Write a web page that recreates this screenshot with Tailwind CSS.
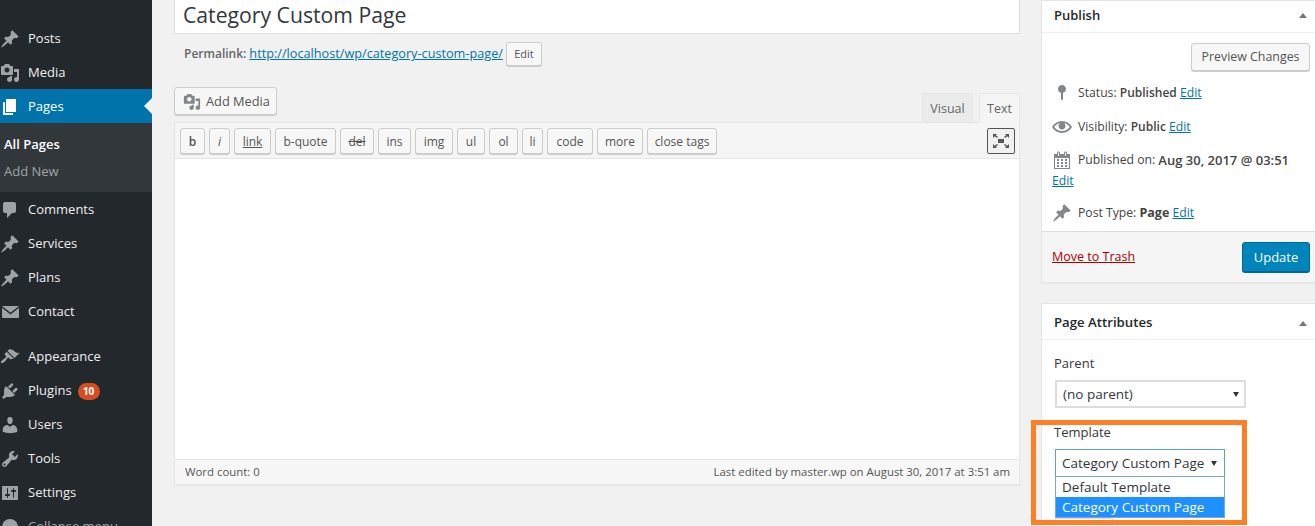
<!DOCTYPE html>
<html lang="en">
<head>
<meta charset="UTF-8">
<title>Edit Page</title>
<script src="https://cdn.jsdelivr.net/npm/@tailwindcss/browser@4"></script>
</head>
<body class="bg-[#f1f1f1] font-['Open_Sans',sans-serif] text-[13px] text-[#444]">
<div class="relative flex w-[1315px] h-[526px] overflow-hidden">

  <!-- Admin menu -->
  <aside class="w-[152px] shrink-0 bg-[#23282d] pt-[21px] text-[#eee] text-[13px]">
    <a class="flex items-center h-[34px] pt-[2px] gap-2"><svg class="w-5 h-5 fill-[#9ea3a8]" viewBox="0 0 20 20"><path d="M10.44 3.02l1.82-1.82 6.36 6.35-1.83 1.82c-1.05-.68-2.48-.57-3.41.36l-.75.75c-.92.93-1.04 2.35-.35 3.41l-1.83 1.82-2.41-2.41-2.8 2.79c-.42.42-3.38 2.71-3.8 2.29s1.86-3.39 2.28-3.81l2.79-2.79L4.1 9.36l1.83-1.82c1.05.69 2.48.57 3.4-.36l.75-.75c.93-.92 1.05-2.35.36-3.41z"/></svg>Posts</a>
    <a class="flex items-center h-[34px] pt-[2px] gap-2"><svg class="w-5 h-5 fill-[#9ea3a8]" viewBox="0 0 20 20"><path d="M13 11V4c0-.55-.45-1-1-1h-1.67L9 1H5L3.67 3H2c-.55 0-1 .45-1 1v7c0 .55.45 1 1 1h10c.55 0 1-.45 1-1zM7 4.5c1.38 0 2.5 1.12 2.5 2.5S8.38 9.5 7 9.5 4.5 8.38 4.5 7 5.62 4.5 7 4.5zM14 6h5v10.5c0 1.38-1.12 2.5-2.5 2.5S14 17.88 14 16.5s1.12-2.5 2.5-2.5c.17 0 .34.02.5.05V9h-3V6zm-4 8.05V13h2v3.5c0 1.38-1.12 2.5-2.5 2.5S7 17.88 7 16.5 8.12 14 9.5 14c.17 0 .34.02.5.05z"/></svg>Media</a>
    <a class="relative flex items-center h-[34px] pt-[2px] gap-2 bg-[#0073aa] text-white"><svg class="w-5 h-5 fill-white" viewBox="0 0 20 20"><path d="M6 15V2h10v13H6zm-1 1h8v2H3V5h2v11z"/></svg>Pages<span class="absolute right-0 top-[9px] border-y-[8px] border-r-[8px] border-y-transparent border-r-[#f1f1f1]"></span></a>
    <div class="h-[69px] bg-[#32373c] pt-[8px] pl-[4px]">
      <div class="h-[27px] leading-[27px] font-semibold text-white">All Pages</div>
      <div class="h-[27px] leading-[27px] text-[#a0a5aa]">Add New</div>
    </div>
    <a class="flex items-center h-[34px] pt-[2px] gap-2"><svg class="w-5 h-5 fill-[#9ea3a8]" viewBox="0 0 20 20"><path d="M5 2h9c1.1 0 2 .9 2 2v7c0 1.1-.9 2-2 2h-2l-5 5v-5H5c-1.1 0-2-.9-2-2V4c0-1.1.9-2 2-2z"/></svg>Comments</a>
    <a class="flex items-center h-[34px] pt-[2px] gap-2"><svg class="w-5 h-5 fill-[#9ea3a8]" viewBox="0 0 20 20"><path d="M10.44 3.02l1.82-1.82 6.36 6.35-1.83 1.82c-1.05-.68-2.48-.57-3.41.36l-.75.75c-.92.93-1.04 2.35-.35 3.41l-1.83 1.82-2.41-2.41-2.8 2.79c-.42.42-3.38 2.71-3.8 2.29s1.86-3.39 2.28-3.81l2.79-2.79L4.1 9.36l1.83-1.82c1.05.69 2.48.57 3.4-.36l.75-.75c.93-.92 1.05-2.35.36-3.41z"/></svg>Services</a>
    <a class="flex items-center h-[34px] pt-[2px] gap-2"><svg class="w-5 h-5 fill-[#9ea3a8]" viewBox="0 0 20 20"><path d="M10.44 3.02l1.82-1.82 6.36 6.35-1.83 1.82c-1.05-.68-2.48-.57-3.41.36l-.75.75c-.92.93-1.04 2.35-.35 3.41l-1.83 1.82-2.41-2.41-2.8 2.79c-.42.42-3.38 2.71-3.8 2.29s1.86-3.39 2.28-3.81l2.79-2.79L4.1 9.36l1.83-1.82c1.05.69 2.48.57 3.4-.36l.75-.75c.93-.92 1.05-2.35.36-3.41z"/></svg>Plans</a>
    <a class="flex items-center h-[34px] pt-[2px] gap-2"><svg class="w-5 h-5" viewBox="0 0 20 20"><rect x="2" y="4" width="17" height="12" rx="1" fill="#9ea3a8"/><path d="M2 5l8.500 6.500L19 5" fill="none" stroke="#23282d" stroke-width="1.500"/></svg>Contact</a>
    <div class="h-[11px]"></div>
    <a class="flex items-center h-[34px] pt-[2px] gap-2"><svg class="w-5 h-5 fill-[#9ea3a8]" viewBox="0 0 20 20"><path d="M14.48 11.06L7.41 3.99l1.5-1.5c.5-.56 2.3-.47 3.51.32 1.21.8 1.43 1.28 2.91 2.1 1.18.64 2.45 1.26 4.45.85zm-.71.71L6.7 4.7 4.93 6.47c-.39.39-.39 1.02 0 1.41l1.06 1.06c.39.39.39 1.03 0 1.42-.6.6-1.43 1.11-2.21 1.69-.35.26-.7.53-1.01.84C1.43 13.23.4 14.99 1.2 15.8c.8.8 2.57-.22 3.91-1.57.31-.31.58-.66.85-1.01.57-.78 1.08-1.61 1.69-2.21.39-.39 1.02-.39 1.41 0l1.06 1.06c.39.39 1.02.39 1.41 0z"/></svg>Appearance</a>
    <a class="flex items-center h-[34px] pt-[2px] gap-2"><svg class="w-5 h-5 fill-[#9ea3a8]" viewBox="0 0 20 20"><path d="M13.11 4.36L9.87 7.6 8 5.73l3.24-3.24c.35-.34 1.05-.2 1.56.32.52.51.66 1.21.31 1.55zm-8 1.77l.91-1.12 9.01 9.01-1.19.84c-.71.71-2.63 1.16-3.82 1.16H6.14L4.9 17.26c-.59.59-1.54.59-2.12 0-.59-.58-.59-1.53 0-2.12l1.24-1.24v-3.88c0-1.13.4-3.19 1.09-3.89zm7.26 3.97l3.24-3.24c.34-.35 1.04-.21 1.55.31.52.51.66 1.21.31 1.55l-3.24 3.25z"/></svg>Plugins<span class="ml-[-2px] w-[22px] h-[17px] rounded-full bg-[#d54e21] text-white text-[10px] font-bold leading-[17px] text-center">10</span></a>
    <a class="flex items-center h-[34px] pt-[2px] gap-2"><svg class="w-5 h-5 fill-[#9ea3a8]" viewBox="0 0 20 20"><path d="M10 9.250c-2.270 0-2.730-3.440-2.730-3.440C7 4.020 7.820 2 9.970 2c2.160 0 2.980 2.020 2.710 3.810 0 0-.41 3.440-2.680 3.440zm0 2.570L12.720 10c2.390 0 4.520 2.330 4.520 4.530v2.490s-3.650 1.130-7.240 1.130c-3.650 0-7.240-1.130-7.240-1.130v-2.490c0-2.250 1.940-4.480 4.470-4.480z"/></svg>Users</a>
    <a class="flex items-center h-[34px] pt-[2px] gap-2"><svg class="w-5 h-5 fill-[#9ea3a8]" viewBox="0 0 20 20"><path d="M16.680 9.770c-1.340 1.340-3.300 1.670-4.950.99l-5.410 6.520c-.99.99-2.590.99-3.580 0s-.99-2.590 0-3.570l6.520-5.420c-.68-1.650-.35-3.610.99-4.950 1.280-1.280 3.120-1.620 4.720-1.060l-2.890 2.890 2.820 2.820 2.860-2.870c.53 1.580.18 3.390-1.080 4.650zM3.810 16.210c.4.39 1.040.39 1.430 0 .4-.4.4-1.040 0-1.430-.39-.4-1.030-.4-1.430 0-.39.39-.39 1.030 0 1.430z"/></svg>Tools</a>
    <a class="flex items-center h-[34px] pt-[2px] gap-2"><svg class="w-5 h-5 fill-[#9ea3a8]" viewBox="0 0 20 20"><path d="M18 16V4c0-.55-.45-1-1-1H3c-.55 0-1 .45-1 1v12c0 .55.45 1 1 1h14c.55 0 1-.45 1-1zM8 11h1c.55 0 1 .45 1 1s-.45 1-1 1H8v1.500c0 .28-.22.5-.5.5s-.5-.22-.5-.5V13H6c-.55 0-1-.45-1-1s.45-1 1-1h1V5.500c0-.28.22-.5.5-.5s.5.22.5.5V11zm5-2h-1c-.55 0-1-.45-1-1s.45-1 1-1h1V5.500c0-.28.22-.5.5-.5s.5.22.5.5V7h1c.55 0 1 .45 1 1s-.45 1-1 1h-1v5.500c0 .28-.22.5-.5.5s-.5-.22-.5-.5V9z"/></svg>Settings</a>
    <a class="flex items-center h-[34px] pt-[2px] gap-2 text-[#a0a5aa]"><svg class="w-5 h-5 fill-[#9ea3a8]" viewBox="0 0 20 20"><circle cx="10" cy="10" r="8"/></svg>Collapse menu</a>
  </aside>

  <!-- Editor column -->
  <main class="w-[846px] ml-[22px] shrink-0">
    <div class="h-[34px] bg-white border border-t-0 border-[#ddd] pl-[8px] text-[21.200px] leading-[30px] text-[#32373c]">Category Custom Page</div>
    <div class="flex items-center h-[24px] mt-[8px] pl-[10px] text-[#666]">
      <b class="font-semibold text-[12px] mr-[3px]">Permalink:</b>
      <a class="text-[12.700px] text-[#0073aa] underline">http://localhost/wp/category-custom-page/</a>
      <span class="ml-[3px] w-[36px] h-[24px] rounded-[3px] border border-[#ccc] bg-[#f7f7f7] shadow-[0_1px_0_#ccc] text-[11px] leading-[22px] text-center text-[#555]">Edit</span>
    </div>
    <div class="flex items-end justify-between h-[35px] mt-[21px]">
      <span class="flex items-center gap-[5px] w-[103px] h-[28px] mb-[7px] pl-[8px] pt-px rounded-[3px] border border-[#ccc] bg-[#f7f7f7] shadow-[0_1px_0_#ccc] text-[#555] text-[12.800px]"><svg class="w-[18px] h-[18px] fill-[#82878c]" viewBox="0 0 20 20"><path d="M13 11V4c0-.55-.45-1-1-1h-1.670L9 1H5L3.670 3H2c-.55 0-1 .45-1 1v7c0 .55.45 1 1 1h10c.55 0 1-.45 1-1zM7 4.500c1.380 0 2.500 1.120 2.500 2.500S8.380 9.500 7 9.500 4.500 8.380 4.500 7 5.620 4.500 7 4.500zM14 6h5v10.500c0 1.380-1.120 2.500-2.500 2.500S14 17.880 14 16.500s1.120-2.500 2.500-2.500c.17 0 .34.02.5.05V9h-3V6zm-4 8.050V13h2v3.500c0 1.380-1.120 2.500-2.500 2.500S7 17.880 7 16.500 8.120 14 9.500 14c.17 0 .34.02.5.05z"/></svg>Add Media</span>
      <div class="flex gap-[6px] text-[12.500px] text-[#666]">
        <span class="w-[51px] h-[29px] leading-[29px] text-center bg-[#ebebeb] border border-b-0 border-[#e5e5e5]">Visual</span>
        <span class="w-[41px] h-[30px] mb-[-1px] leading-[30px] text-center bg-[#f5f5f5] border border-b-0 border-[#e5e5e5] relative">Text</span>
      </div>
    </div>
    <div class="border border-[#e5e5e5] bg-white shadow-[0_1px_1px_rgba(0,0,0,.04)]">
      <div class="flex items-center h-[36px] pl-[5px] pr-[4px] gap-[4px] bg-[#f5f5f5] border-b border-[#e5e5e5] text-[12px] text-[#555]">
        <span class="w-[25px] h-[26px] leading-[26px] text-center font-semibold rounded-[3px] border border-[#ccc] bg-[#f7f7f7] shadow-[0_1px_0_#ccc]">b</span>
        <span class="w-[21px] h-[26px] leading-[26px] text-center italic rounded-[3px] border border-[#ccc] bg-[#f7f7f7] shadow-[0_1px_0_#ccc]">i</span>
        <span class="w-[37px] h-[26px] leading-[26px] text-center underline rounded-[3px] border border-[#ccc] bg-[#f7f7f7] shadow-[0_1px_0_#ccc]">link</span>
        <span class="w-[61px] h-[26px] leading-[26px] text-center rounded-[3px] border border-[#ccc] bg-[#f7f7f7] shadow-[0_1px_0_#ccc]">b-quote</span>
        <span class="w-[34px] h-[26px] leading-[26px] text-center line-through rounded-[3px] border border-[#ccc] bg-[#f7f7f7] shadow-[0_1px_0_#ccc]">del</span>
        <span class="w-[33px] h-[26px] leading-[26px] text-center rounded-[3px] border border-[#ccc] bg-[#f7f7f7] shadow-[0_1px_0_#ccc]">ins</span>
        <span class="w-[38px] h-[26px] leading-[26px] text-center rounded-[3px] border border-[#ccc] bg-[#f7f7f7] shadow-[0_1px_0_#ccc]">img</span>
        <span class="w-[28px] h-[26px] leading-[26px] text-center rounded-[3px] border border-[#ccc] bg-[#f7f7f7] shadow-[0_1px_0_#ccc]">ul</span>
        <span class="w-[29px] h-[26px] leading-[26px] text-center rounded-[3px] border border-[#ccc] bg-[#f7f7f7] shadow-[0_1px_0_#ccc]">ol</span>
        <span class="w-[21px] h-[26px] leading-[26px] text-center rounded-[3px] border border-[#ccc] bg-[#f7f7f7] shadow-[0_1px_0_#ccc]">li</span>
        <span class="w-[46px] h-[26px] leading-[26px] text-center rounded-[3px] border border-[#ccc] bg-[#f7f7f7] shadow-[0_1px_0_#ccc]">code</span>
        <span class="w-[46px] h-[26px] leading-[26px] text-center rounded-[3px] border border-[#ccc] bg-[#f7f7f7] shadow-[0_1px_0_#ccc]">more</span>
        <span class="w-[70px] h-[26px] leading-[26px] text-center rounded-[3px] border border-[#ccc] bg-[#f7f7f7] shadow-[0_1px_0_#ccc]">close tags</span>
        <span class="ml-auto flex items-center justify-center w-[28px] h-[26px] rounded-[2px] border border-[#555] bg-[#f1f1f1]">
          <svg class="w-[18px] h-[16px] fill-[#555]" viewBox="0 0 18 16"><path d="M6 6h6v4H6zM1 1h4L3.800 2.200 6 4 5 5 2.800 3.200 1 5zM17 1v4l-1.800-1.800L13 5 12 4l2.200-1.800L13 1zM1 15v-4l1.800 1.800L5 11l1 1-2.200 1.800L5 15zM17 15h-4l1.200-1.200L12 12l1-1 2.200 1.800L17 11z"/></svg>
        </span>
      </div>
      <div class="h-[300px] bg-white"></div>
      <div class="flex items-center justify-between h-[25px] pl-[10px] pr-[9px] bg-[#f7f7f7] border-t border-[#e5e5e5] text-[11.400px] text-[#555]">
        <span>Word count: 0</span>
        <span>Last edited by master.wp on August 30, 2017 at 3:51 am</span>
      </div>
    </div>
  </main>

  <!-- Side boxes -->
  <div class="w-[274px] ml-[21px] shrink-0">
    <section class="h-[283px] bg-white border border-r-0 border-[#e5e5e5] shadow-[0_1px_1px_rgba(0,0,0,.04)]">
      <div class="flex items-center justify-between h-[32px] pl-[12px] pr-[8px] pb-[2px] border-b border-[#eee] font-semibold text-[#23282d]">Publish<span class="border-x-[4px] border-b-[5px] border-x-transparent border-b-[#72777c]"></span></div>
      <div class="h-[198px] pr-[5px] text-[12.200px]">
        <div class="flex justify-end pt-[10px]"><span class="w-[119px] h-[28px] leading-[26px] text-center rounded-[3px] border border-[#ccc] bg-[#f7f7f7] shadow-[0_1px_0_#ccc] text-[#555] text-[12.400px]">Preview Changes</span></div>
        <div class="flex items-center h-[34px] mt-[5px] pl-[10px]"><svg class="w-5 h-5 fill-[#82878c] mr-[6px]" viewBox="0 0 20 20"><path d="M14 6c0-2.210-1.790-4-4-4S6 3.790 6 6c0 1.860 1.280 3.410 3 3.860V16c0 .55.45 1 1 1s1-.45 1-1V9.860c1.720-.45 3-2 3-3.860z"/></svg>Status:&nbsp;<b class="font-semibold text-[12px]">Published</b>&nbsp;<a class="text-[#0073aa] underline">Edit</a></div>
        <div class="flex items-center h-[34px] pl-[10px]"><svg class="w-5 h-5 fill-[#82878c] mr-[6px]" viewBox="0 0 20 20"><path d="M19.700 9.400C17.700 6 14 3.900 10 3.900S2.300 6 .3 9.400L0 10l.3.6c2 3.400 5.700 5.500 9.700 5.500s7.700-2.100 9.700-5.500l.3-.6-.3-.6zM10 14.100c-3.100 0-6-1.600-7.700-4.100C3.600 8 5.700 6.600 8 6.100c-.9.6-1.500 1.700-1.500 2.900 0 1.900 1.600 3.500 3.500 3.500s3.500-1.600 3.500-3.500c0-1.200-.6-2.300-1.500-2.900 2.300.5 4.400 1.900 5.700 3.900-1.700 2.500-4.600 4.100-7.700 4.100z"/></svg>Visibility:&nbsp;<b class="font-semibold text-[12px]">Public</b>&nbsp;<a class="text-[#0073aa] underline">Edit</a></div>
        <div class="h-[52px] pl-[10px] pt-[6px] leading-[20px]"><div class="flex items-center"><svg class="w-5 h-5 fill-[#82878c] mr-[6px]" viewBox="0 0 20 20"><path d="M15 4h3v15H2V4h3V3c0-.41.15-.76.44-1.060.29-.29.65-.44 1.060-.44s.77.15 1.060.44c.29.3.44.65.44 1.060v1h4V3c0-.41.15-.76.44-1.060.29-.29.65-.44 1.060-.44s.77.15 1.060.44c.29.3.44.65.44 1.060v1zM6 3v2.500c0 .14.05.26.15.36.09.09.21.14.35.14s.26-.05.36-.14c.09-.1.14-.22.14-.36V3c0-.14-.05-.26-.14-.35-.1-.1-.22-.15-.36-.15s-.26.05-.35.15c-.1.09-.15.21-.15.35zm7 0v2.500c0 .14.05.26.14.36.1.09.22.14.36.14s.26-.05.36-.14c.09-.1.14-.22.14-.36V3c0-.14-.05-.26-.14-.35-.1-.1-.22-.15-.36-.15s-.26.05-.36.15c-.09.09-.14.21-.14.35zm4 15V8H3v10h14zM7 9v2H5V9h2zm2 0h2v2H9V9zm4 2V9h2v2h-2zm-6 1v2H5v-2h2zm2 0h2v2H9v-2zm4 2v-2h2v2h-2zm-6 1v2H5v-2h2zm4 2H9v-2h2v2zm4 0h-2v-2h2v2z"/></svg>Published on:&nbsp;<b class="font-semibold text-[13px]">Aug 30, 2017 @ 03:51</b></div><a class="block mt-px text-[#0073aa] underline">Edit</a></div>
        <div class="flex items-center h-[34px] pl-[10px]"><svg class="w-5 h-5 fill-[#82878c] mr-[6px]" viewBox="0 0 20 20"><path d="M10.440 3.020l1.820-1.820 6.360 6.350-1.830 1.820c-1.050-.68-2.480-.57-3.410.36l-.75.75c-.92.93-1.040 2.350-.35 3.410l-1.830 1.820-2.410-2.410-2.800 2.790c-.42.42-3.380 2.710-3.800 2.290s1.860-3.390 2.280-3.810l2.790-2.790L4.100 9.360l1.830-1.820c1.050.69 2.480.57 3.400-.36l.75-.75c.93-.92 1.050-2.350.36-3.41z"/></svg>Post Type:&nbsp;<b class="font-bold text-[12.500px]">Page</b>&nbsp;<a class="text-[#0073aa] underline">Edit</a></div>
      </div>
      <div class="flex items-center justify-between h-[51px] pl-[10px] pr-[5px] bg-[#f5f5f5] border-t border-[#ddd]">
        <a class="text-[#a00] underline text-[12.500px]">Move to Trash</a>
        <span class="w-[68px] h-[30px] leading-[28px] text-center rounded-[3px] bg-[#0085ba] border border-[#006799] shadow-[0_1px_0_#006799] text-white">Update</span>
      </div>
    </section>

    <section class="h-[240px] mt-[20px] bg-white border border-r-0 border-b-0 border-[#e5e5e5]">
      <div class="flex items-center justify-between h-[36px] pl-[12px] pr-[8px] pt-[3px] border-b border-[#eee] font-semibold text-[#23282d] text-[13.200px]">Page Attributes<span class="border-x-[4px] border-b-[5px] border-x-transparent border-b-[#72777c]"></span></div>
      <div class="pl-[12px] pt-[14px] text-[13.500px] text-[#32373c]">
        <div class="h-[18px] leading-[18px] text-[13px]">Parent</div>
        <div class="flex items-center justify-between w-[191px] h-[28px] mt-[8px] ml-px pl-[6px] pr-[5px] border-2 border-[#ddd] bg-white">(no parent)<span class="border-x-[3px] border-t-[5px] border-x-transparent border-t-[#333]"></span></div>
        <div class="h-[18px] leading-[18px] mt-[15px] text-[13px]">Template</div>
        <div class="relative mt-[8px] ml-px w-[170px]">
          <div class="flex items-center justify-between h-[29px] pl-[6px] pr-[7px] border border-[#5b9dd9] bg-white">Category Custom Page<span class="border-x-[3.500px] border-t-[5px] border-x-transparent border-t-[#333]"></span></div>
          <div class="absolute left-0 top-[27px] w-full border border-[#7aa7d9] bg-white z-10">
            <div class="h-[20px] leading-[20px] pl-[6px]">Default Template</div>
            <div class="h-[20px] leading-[20px] pl-[6px] bg-[#1e90ff] text-white">Category Custom Page</div>
          </div>
        </div>
        <div class="w-[58px] h-[28px] mt-[40px] ml-px border border-[#ddd] bg-white"></div>
      </div>
    </section>
  </div>

  <!-- Orange annotation -->
  <div class="absolute left-[1031px] top-[420px] w-[216px] h-[105px] border-[5px] border-[#ff7f27] z-20"></div>
</div>
</body>
</html>
